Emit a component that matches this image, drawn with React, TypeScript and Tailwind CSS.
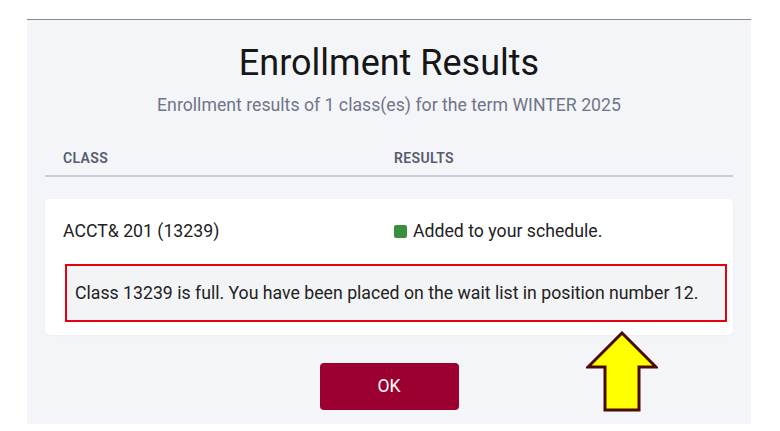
export default function App() {
  return (
    <div
      className="relative h-[431px] w-[780px] overflow-hidden bg-white"
      style={{ fontFamily: "Roboto, 'Liberation Sans', sans-serif" }}
    >
      <div className="ml-[27px] mt-[19px] h-[405px] w-[724px] border-t border-[#8a8a8a] bg-[#f4f5f9]">
        <h1 className="pt-[20px] text-center text-[36px] leading-[46px] font-normal text-[#161616]">
          Enrollment Results
        </h1>
        <p className="mt-[8px] text-center text-[17.7px] leading-[22px] text-[#6f7587]">
          Enrollment results of 1 class(es) for the term WINTER 2025
        </p>

        <div className="mx-[18px] mt-[32px] grid grid-cols-[331px_1fr] border-b-2 border-[#c9cddb] px-[18px] pb-[7px] text-[14px] leading-[20px] font-semibold tracking-wide text-[#565c70]">
          <span>CLASS</span>
          <span>RESULTS</span>
        </div>

        <div className="mx-[18px] mt-[22px] rounded-[5px] bg-white pt-[20px] pb-[13px] shadow-[0_1px_2px_rgba(0,0,0,0.04)]">
          <div className="grid grid-cols-[331px_1fr] px-[18px] text-[17.7px] leading-[24px] text-[#222]">
            <span>ACCT&amp; 201 (13239)</span>
            <span className="flex items-center gap-[6px]">
              <span className="h-[13px] w-[13px] rounded-[2px] bg-[#3b8e3e]" />
              Added to your schedule.
            </span>
          </div>
          <div className="mt-[21px] mr-[6px] ml-[20px] border-2 border-[#e60012] bg-[#f3f4f6] px-[8px] pt-[16px] pb-[15px] text-[17.7px] leading-[23px] text-[#222]">
            Class 13239 is full. You have been placed on the wait list in position number 12.
          </div>
        </div>

        <div className="mt-[28px] flex justify-center">
          <button className="h-[47px] w-[139px] rounded-[4px] bg-[#9b0030] text-[17.5px] text-white">
            OK
          </button>
        </div>
      </div>

      <svg
        className="absolute top-[331px] left-[586px]"
        width="72"
        height="81"
        viewBox="0 0 72 81"
      >
        <polygon
          points="36,2 70,36 53,36 53,79 19,79 19,36 2,36"
          fill="#ffff00"
          stroke="#4a0a0a"
          strokeWidth="3"
          strokeLinejoin="miter"
        />
      </svg>
    </div>
  );
}
